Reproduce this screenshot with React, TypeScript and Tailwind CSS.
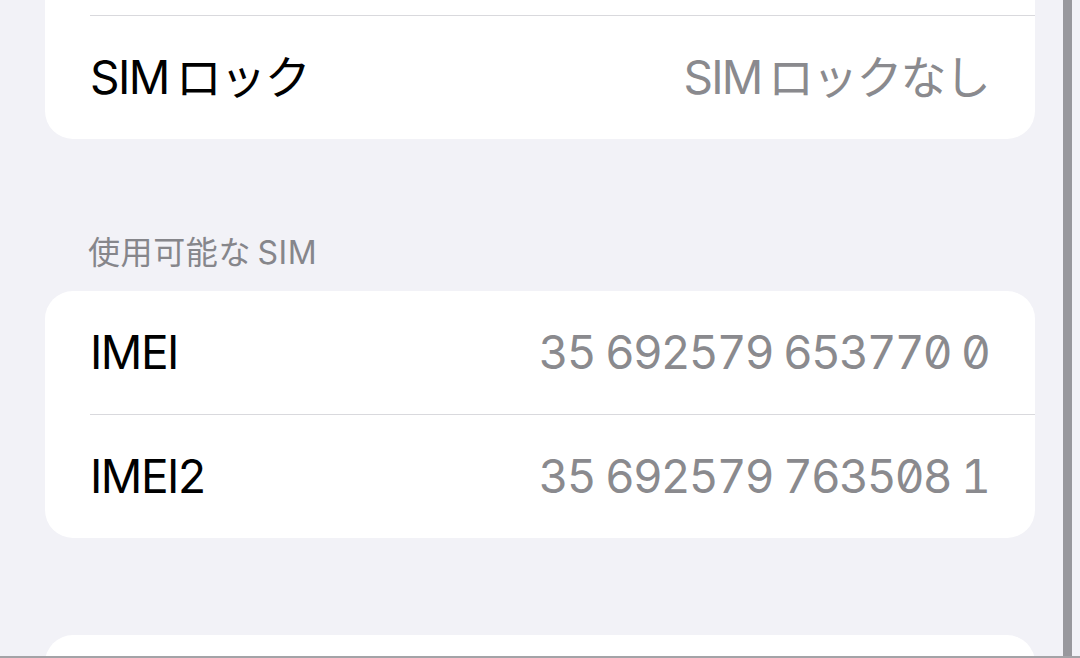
import React from 'react';

// Ligne d'une liste groupée façon Réglages iOS
const Row: React.FC<{ label: string; value: string; mono?: boolean; divider?: boolean }> = ({ label, value, mono, divider }) => (
  <div className="pl-[45px]">
    {divider && <div className="h-px bg-[#d9d9dd]" />}
    <div className="flex h-[123px] items-center justify-between pr-[46px]">
      <span className="text-[46px] text-black tracking-[-1.5px]">{label}</span>
      <span
        className={`text-[46px] text-[#8a8a8e] ${mono ? 'tabular-nums slashed-zero tracking-[-1.9px]' : 'tracking-[-1.8px]'}`}
      >
        {value}
      </span>
    </div>
  </div>
);

const App: React.FC = () => {
  return (
    <div
      className="flex h-[658px] w-[1080px] overflow-hidden border-b-2 border-[#a3a3a7] bg-[#f2f2f7]"
      style={{ fontFamily: 'Inter, "Noto Sans CJK JP", sans-serif' }}
    >
      <div className="flex w-[1063px] flex-col pl-[45px] pr-[28px]">
        <div className="-mt-[108px] shrink-0 rounded-[28px] bg-white">
          <div className="h-[123px]" />
          <Row label={'SIM\u2009ロック'} value={'SIM\u2009ロックなし'} divider />
        </div>

        <div className="mt-[95px] mb-[20px] pl-[43px] text-[32px] leading-[37px] tracking-[0.6px] text-[#86868b]">
          使用可能な{'\u2009'}SIM
        </div>

        <div className="shrink-0 rounded-[28px] bg-white">
          <Row label="IMEI" value="35 692579 653770 0" mono />
          <Row label="IMEI2" value="35 692579 763508 1" mono divider />
        </div>

        <div className="mt-[97px] h-[123px] shrink-0 rounded-[28px] bg-white" />
      </div>
      <div className="w-[9px] shrink-0 bg-[#98989d]" />
      <div className="flex-1" />
    </div>
  );
};

export default App;
